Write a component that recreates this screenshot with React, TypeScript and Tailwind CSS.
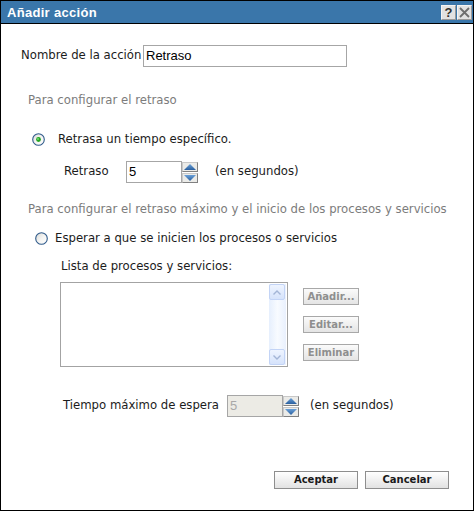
import React from "react";

function Radio({ checked }: { checked?: boolean }) {
  return (
    <svg width="13" height="13" viewBox="0 0 13 13" className="shrink-0">
      <defs>
        <linearGradient id={checked ? "rg1" : "rg2"} x1="0" y1="0" x2="1" y2="1">
          <stop offset="0" stopColor="#d8d8d4" />
          <stop offset="0.5" stopColor="#f4f4f2" />
          <stop offset="1" stopColor="#ffffff" />
        </linearGradient>
      </defs>
      <circle cx="6.5" cy="6.5" r="5.8" fill={`url(#${checked ? "rg1" : "rg2"})`} stroke="#2f5a8a" strokeWidth="1.1" />
      {checked && (
        <>
          <circle cx="6.5" cy="6.5" r="2.4" fill="#21a421" />
          <circle cx="6" cy="6" r="1" fill="#6fe06f" />
        </>
      )}
    </svg>
  );
}

function Spinner() {
  return (
    <div className="flex flex-col gap-[1px] w-[16px] shrink-0">
      <div className="h-[10px] border border-[#808080] border-t-[#c8c8c8] border-l-[#c8c8c8] bg-[#ebebe8] flex items-center justify-center">
        <svg width="12" height="6" viewBox="0 0 12 6">
          <defs>
            <linearGradient id="tu" x1="0" y1="0" x2="0" y2="1">
              <stop offset="0" stopColor="#6aa0d8" />
              <stop offset="1" stopColor="#2a5f9e" />
            </linearGradient>
          </defs>
          <path d="M0 6 L6 0 L12 6 Z" fill="url(#tu)" />
        </svg>
      </div>
      <div className="h-[10px] border border-[#808080] border-t-[#c8c8c8] border-l-[#c8c8c8] bg-[#ebebe8] flex items-center justify-center">
        <svg width="12" height="6" viewBox="0 0 12 6">
          <defs>
            <linearGradient id="td" x1="0" y1="0" x2="0" y2="1">
              <stop offset="0" stopColor="#6aa0d8" />
              <stop offset="1" stopColor="#2a5f9e" />
            </linearGradient>
          </defs>
          <path d="M0 0 L12 0 L6 6 Z" fill="url(#td)" />
        </svg>
      </div>
    </div>
  );
}

function DisabledBtn({ label }: { label: string }) {
  return (
    <div className="w-[56px] h-[17px] border border-[#a8a8a8] bg-gradient-to-b from-[#fbfbfb] to-[#e4e4e4] flex items-center justify-center font-['DejaVu_Sans',sans-serif] font-bold text-[10px] text-[#8e8e8e] leading-none">
      {label}
    </div>
  );
}

function MainBtn({ label }: { label: string }) {
  return (
    <div className="w-[84px] h-[18px] border border-[#8e8e8e] bg-gradient-to-b from-[#ffffff] to-[#e2e2e2] flex items-center justify-center font-['DejaVu_Sans',sans-serif] font-bold text-[10px] text-[#1a1a1a] leading-none">
      {label}
    </div>
  );
}

function ScrollBtn({ up }: { up?: boolean }) {
  return (
    <div className="h-[16px] w-[16px] border border-[#c3d4f6] rounded-[2px] bg-gradient-to-b from-[#eef4ff] to-[#d6e3fb] flex items-center justify-center">
      <svg width="8" height="5" viewBox="0 0 8 5">
        <path d={up ? "M0.5 4.5 L4 1 L7.5 4.5" : "M0.5 0.5 L4 4 L7.5 0.5"} fill="none" stroke="#a3b5d6" strokeWidth="1.4" />
      </svg>
    </div>
  );
}

export default function App() {
  return (
    <div className="w-[474px] h-[511px] bg-white border border-black flex flex-col font-['DejaVu_Sans',sans-serif] text-[11.7px] text-[#1c1c1c] overflow-hidden">
      {/* Title bar */}
      <div className="h-[23px] shrink-0 bg-[#3a76aa] border-b border-black flex items-center justify-between pl-[6px] pr-[1px]">
        <span className="font-['Liberation_Sans',sans-serif] font-bold text-[13px] text-white leading-none tracking-[0.3px]">Añadir acción</span>
        <div className="flex gap-[1px] items-center">
          <div className="w-[15px] h-[15px] bg-[#e2e2e2] border border-[#f4f4f4] border-r-[#9a9a9a] border-b-[#9a9a9a] flex items-center justify-center font-['Liberation_Sans',sans-serif] font-bold text-[13px] text-[#303030] leading-none">?</div>
          <div className="w-[15px] h-[15px] bg-[#e2e2e2] border border-[#f4f4f4] border-r-[#9a9a9a] border-b-[#9a9a9a] flex items-center justify-center">
            <svg width="11" height="11" viewBox="0 0 11 11">
              <path d="M1 1 L10 10 M10 1 L1 10" stroke="#6e6e6e" strokeWidth="1.8" />
            </svg>
          </div>
        </div>
      </div>

      {/* Nombre */}
      <div className="mt-[21px] pl-[20px] flex items-center h-[22px]">
        <span className="w-[122px] shrink-0 whitespace-nowrap">Nombre de la acción</span>
        <div className="w-[204px] h-[22px] border border-[#a6a6a6] flex items-center pl-[2px] font-['Liberation_Sans',sans-serif] text-[13px] text-black">Retraso</div>
      </div>

      {/* Heading 1 */}
      <div className="mt-[26px] pl-[27px] h-[14px] leading-[14px] text-[#7c7c7c]">Para configurar el retraso</div>

      {/* Radio 1 */}
      <div className="mt-[25px] pl-[31px] h-[14px] flex items-center">
        <Radio checked />
        <span className="ml-[13px] leading-[14px]">Retrasa un tiempo específico.</span>
      </div>

      {/* Retraso row */}
      <div className="mt-[15px] pl-[63px] h-[22px] flex items-center">
        <span className="w-[62px] shrink-0">Retraso</span>
        <div className="w-[56px] h-[22px] border border-[#a6a6a6] flex items-center pl-[2px] font-['Liberation_Sans',sans-serif] text-[13px] text-black">5</div>
        <Spinner />
        <span className="ml-[17px]">(en segundos)</span>
      </div>

      {/* Heading 2 */}
      <div className="mt-[19px] pl-[27px] h-[14px] leading-[14px] text-[#7c7c7c] whitespace-nowrap">Para configurar el retraso máximo y el inicio de los procesos y servicios</div>

      {/* Radio 2 */}
      <div className="mt-[15px] pl-[34px] h-[14px] flex items-center">
        <Radio />
        <span className="ml-[7px] leading-[14px]">Esperar a que se inicien los procesos o servicios</span>
      </div>

      {/* Lista label */}
      <div className="mt-[14px] pl-[60px] h-[14px] leading-[14px]">Lista de procesos y servicios:</div>

      {/* Listbox + buttons */}
      <div className="mt-[9px] pl-[59px] flex">
        <div className="w-[228px] h-[85px] border border-[#a3a3a3] flex justify-end py-[1px] pr-[1px]">
          <div className="w-[17px] flex flex-col justify-between bg-gradient-to-r from-[#e6effd] via-[#f8fbff] to-[#e9f0fd]">
            <ScrollBtn up />
            <ScrollBtn />
          </div>
        </div>
        <div className="ml-[15px] mt-[6px] flex flex-col gap-[11px]">
          <DisabledBtn label="Añadir..." />
          <DisabledBtn label="Editar..." />
          <DisabledBtn label="Eliminar" />
        </div>
      </div>

      {/* Tiempo row */}
      <div className="mt-[28px] pl-[62px] h-[22px] flex items-center">
        <span className="w-[164px] shrink-0 whitespace-nowrap">Tiempo máximo de espera</span>
        <div className="w-[56px] h-[22px] border border-[#a6a6a6] bg-[#ecebe5] flex items-center pl-[2px] font-['Liberation_Sans',sans-serif] text-[13px] text-[#a8a8a8]">5</div>
        <Spinner />
        <span className="ml-[11px]">(en segundos)</span>
      </div>

      {/* Bottom buttons */}
      <div className="mt-[54px] pr-[24px] flex justify-end gap-[7px]">
        <MainBtn label="Aceptar" />
        <MainBtn label="Cancelar" />
      </div>
    </div>
  );
}
